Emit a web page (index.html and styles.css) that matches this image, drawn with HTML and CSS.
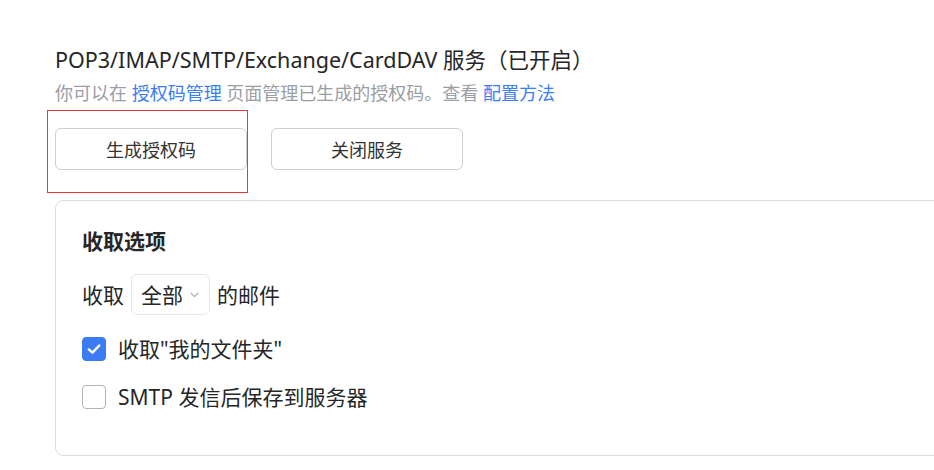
FILE: index.html
```html
<!DOCTYPE html>
<html lang="zh-CN">
<head>
<meta charset="utf-8">
<link rel="stylesheet" href="styles.css">
</head>
<body>
<div class="page">
  <h2 class="title">POP3/IMAP/SMTP/Exchange/CardDAV 服务（已开启）</h2>
  <p class="sub">你可以在 <a class="link">授权码管理</a> 页面管理已生成的授权码。查看 <a class="link">配置方法</a></p>
  <div class="actions">
    <div class="btn-wrap">
      <button class="btn">生成授权码</button>
      <span class="highlight"></span>
    </div>
    <button class="btn">关闭服务</button>
  </div>
  <section class="card">
    <h3 class="card-title">收取选项</h3>
    <div class="fetch-row">
      <span>收取</span>
      <span class="select">全部<svg class="chev" width="9" height="6" viewBox="0 0 9 6"><polyline points="0.8,1 4.5,4.6 8.2,1" fill="none" stroke="#a8a8a8" stroke-width="1.1"/></svg></span>
      <span>的邮件</span>
    </div>
    <label class="check-row first">
      <span class="box checked"><svg width="18" height="18" viewBox="0 0 18 18"><polyline points="3.8,9.4 7.4,12.6 14.2,5.6" fill="none" stroke="#fff" stroke-width="2.4" stroke-linecap="round" stroke-linejoin="round"/></svg></span>
      <span>收取"我的文件夹"</span>
    </label>
    <label class="check-row">
      <span class="box"></span>
      <span>SMTP 发信后保存到服务器</span>
    </label>
  </section>
</div>
</body>
</html>
```

FILE: styles.css
```css
html, body {
  margin: 0;
  padding: 0;
  background: #ffffff;
  overflow: hidden;
}
body {
  font-family: "Noto Sans", "Noto Sans CJK SC", sans-serif;
  color: #262626;
  text-spacing-trim: space-all;
}
.page {
  padding: 47px 0 0 55px;
}
.title {
  margin: 0;
  font-size: 21.5px;
  font-weight: 400;
  line-height: 26px;
  color: #262626;
}
.sub {
  margin: 7px 0 0;
  font-size: 18px;
  line-height: 26px;
  color: #9a9da3;
}
.link {
  color: #3b7ef5;
  text-decoration: none;
}
.actions {
  display: flex;
  gap: 24px;
  margin-top: 22px;
}
.btn-wrap {
  position: relative;
  display: flex;
}
.btn {
  width: 192px;
  height: 42px;
  border: 1px solid #cfcfd2;
  border-radius: 6px;
  background: #fff;
  font-family: inherit;
  font-size: 18px;
  color: #333;
  padding: 0;
}
.highlight {
  position: absolute;
  left: -8px;
  top: -18px;
  width: 201px;
  height: 83px;
  box-sizing: border-box;
  border: 1px solid #e53935;
  pointer-events: none;
}
.card {
  margin-top: 30px;
  width: 920px;
  border: 1px solid #dcdde1;
  border-radius: 8px;
  padding: 27px 0 46px 26px;
  font-size: 21px;
  color: #262626;
}
.card-title {
  margin: 0;
  font-size: 21px;
  font-weight: 700;
  line-height: 26px;
  color: #262626;
}
.fetch-row {
  display: flex;
  align-items: center;
  gap: 7px;
  margin-top: 20px;
  line-height: 26px;
}
.select {
  display: flex;
  align-items: center;
  box-sizing: border-box;
  width: 79px;
  height: 41px;
  padding-left: 9px;
  border: 1px solid #e6e6e8;
  border-radius: 6px;
}
.chev {
  margin-left: 7px;
}
.check-row {
  display: flex;
  align-items: center;
  gap: 12px;
  height: 24px;
  margin-top: 24px;
  line-height: 26px;
}
.check-row.first {
  margin-top: 22px;
}
.box {
  box-sizing: border-box;
  flex: none;
  width: 24px;
  height: 24px;
  border: 1px solid #b3b3b8;
  border-radius: 4px;
  display: flex;
  align-items: center;
  justify-content: center;
  background: #fff;
}
.box.checked {
  background: #3b7cf4;
  border-color: #3b7cf4;
}
```
